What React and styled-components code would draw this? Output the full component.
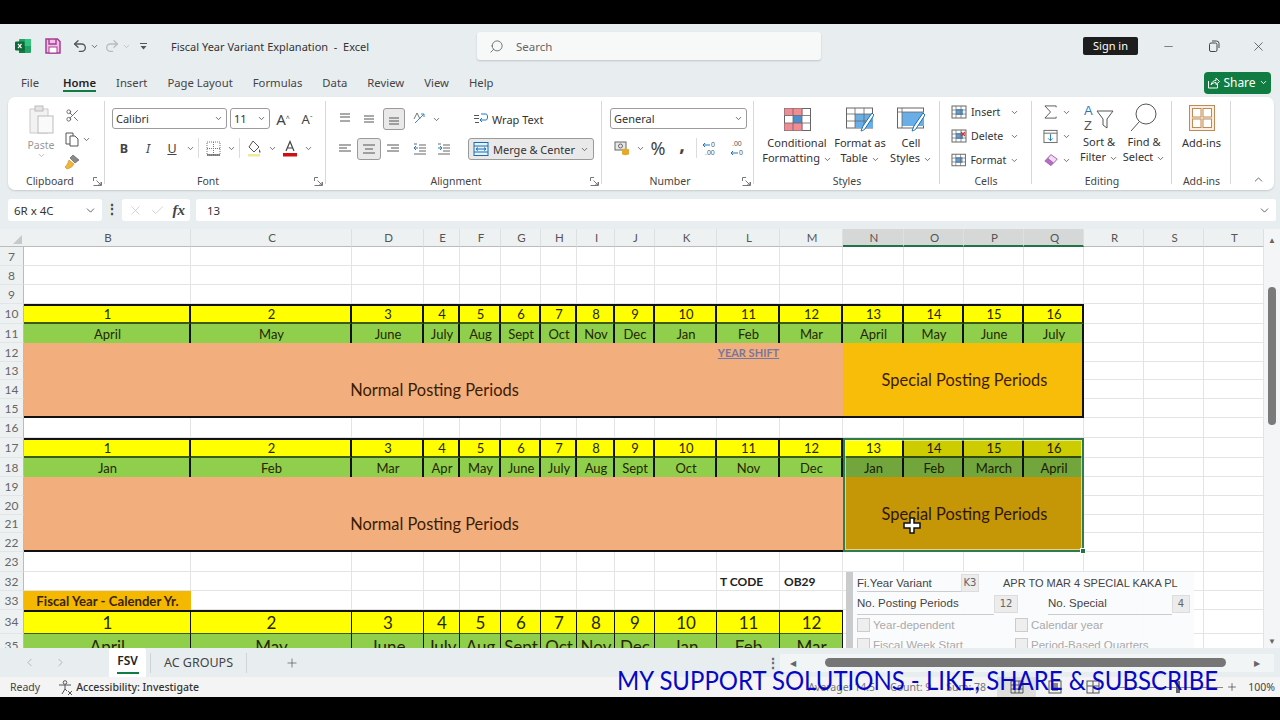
import React from 'react';
import styled, { createGlobalStyle } from 'styled-components';
import {
  Undo2, Redo2, Search, Minus, X, ChevronDown, ChevronUp, Plus, ChevronLeft, ChevronRight, Check, Scissors,
} from 'lucide-react';

const UI = '"Noto Sans", "Open Sans", sans-serif';
const CELL = 'Lato, "Liberation Sans", sans-serif';

const GlobalStyle = createGlobalStyle`
  html, body { margin: 0; padding: 0; background: #000; }
  * { box-sizing: border-box; }
`;

const Page = styled.div`
  width: 1280px;
  height: 720px;
  background: #000;
  padding: 24px 0 23px;
  overflow: hidden;
`;

const Win = styled.div`
  position: relative;
  height: 673px;
  display: flex;
  flex-direction: column;
  background: #e8eef0;
  font-family: ${UI};
  color: #333;
  overflow: hidden;
`;

/* title bar */
const TitleBar = styled.div`
  height: 44px;
  flex: none;
  display: flex;
  align-items: center;
  padding-left: 15px;
`;

const Qat = styled.div`
  display: flex;
  flex: none;
  align-items: center;
  width: 156px;
`;

const QatSlot = styled.span`
  width: ${p => p.$w}px;
  margin-left: ${p => p.$ml || 0}px;
  display: flex;
  justify-content: center;
  align-items: center;
`;

const DocTitle = styled.div`
  width: 306px;
  flex: none;
  font-size: 11px;
  color: #333;
`;

const SearchBox = styled.div`
  width: 344px;
  flex: none;
  height: 28px;
  background: #f7f8f8;
  border-radius: 3px;
  box-shadow: 0 1px 2px rgba(0, 0, 0, 0.18);
  display: flex;
  align-items: center;
  gap: 12px;
  padding-left: 12px;
  font-size: 11.5px;
  color: #666;
`;

const SignIn = styled.div`
  margin-left: 262px;
  width: 55px;
  flex: none;
  height: 18px;
  background: #1d1d1d;
  color: #fff;
  border-radius: 2px;
  font-size: 11px;
  line-height: 18px;
  text-align: center;
`;

const WinControls = styled.div`
  margin-left: 8px;
  flex: none;
  display: flex;
  align-items: center;
`;

const WinBtn = styled.span`
  width: 45px;
  display: flex;
  justify-content: center;
  color: #444;
`;

/* tabs */
const TabRow = styled.div`
  height: 29px;
  flex: none;
  display: flex;
  align-items: center;
  padding: 0 9px 0 21px;
  gap: 20px;
  font-size: 11.3px;
`;

const Tab = styled.div`
  position: relative;
  color: ${p => (p.$on ? '#1f1f1f' : '#444')};
  font-weight: ${p => (p.$on ? 600 : 400)};
  margin-right: ${p => p.$mr || 0}px;
  &::after {
    content: '';
    display: ${p => (p.$on ? 'block' : 'none')};
    position: absolute;
    left: 0;
    right: 0;
    bottom: -2px;
    height: 2px;
    background: #107c41;
  }
`;

const ShareBtn = styled.div`
  margin-left: auto;
  width: 67px;
  height: 22px;
  background: #107c41;
  color: #fff;
  border-radius: 4px;
  display: flex;
  align-items: center;
  justify-content: center;
  gap: 3px;
  font-size: 12px;
`;

/* ribbon */
const Ribbon = styled.div`
  height: 93px;
  flex: none;
  margin: 0 6px 0 8px;
  background: #fff;
  border-radius: 7px;
  box-shadow: 0 1px 2px rgba(0, 0, 0, 0.15);
  display: flex;
`;

const Group = styled.div`
  width: ${p => p.$w}px;
  flex: none;
  display: flex;
  flex-direction: column;
  position: relative;
  &::after {
    content: '';
    position: absolute;
    right: 0;
    top: 4px;
    bottom: 6px;
    width: 1px;
    background: #d8d8d8;
  }
`;

const GroupBody = styled.div`
  height: 77px;
  flex: none;
  display: flex;
  padding: ${p => p.$pad || '0'};
  gap: ${p => p.$gap || 0}px;
`;

const GroupLabel = styled.div`
  position: relative;
  height: 14px;
  font-size: 10.5px;
  line-height: 14px;
  color: #444;
  padding-left: ${p => p.$pl || 0}px;
  padding-right: ${p => p.$pr || 0}px;
  text-align: ${p => (p.$pl ? 'left' : 'center')};
`;

const Launcher = styled.svg`
  position: absolute;
  right: 3px;
  top: 3px;
  width: 9px;
  height: 9px;
`;

const PasteCol = styled.div`
  width: 28px;
  display: flex;
  flex-direction: column;
  align-items: center;
  padding-top: 8px;
  font-size: 10.5px;
  color: #999;
`;

const PasteText = styled.span`
  margin-top: 5px;
  line-height: 12px;
`;

const StackCol = styled.div`
  display: flex;
  flex-direction: column;
  width: ${p => (p.$w ? `${p.$w}px` : 'auto')};
  flex: none;
  padding-top: ${p => p.$top || 0}px;
  gap: ${p => p.$gap || 0}px;
`;

const ToolRow = styled.div`
  display: flex;
  align-items: center;
  height: ${p => p.$h || 22}px;
`;

const Slot = styled.span`
  flex: none;
  width: ${p => p.$w}px;
  height: ${p => p.$h || 20}px;
  margin-left: ${p => p.$ml || 0}px;
  display: flex;
  align-items: center;
  justify-content: center;
  font-size: ${p => p.$fs || 12}px;
  color: ${p => p.$c || '#444'};
  font-weight: ${p => p.$fw || 400};
  font-style: ${p => p.$fi || 'normal'};
  border-radius: 3px;
  padding-bottom: ${p => p.$pb || 0}px;
  ${p => p.$on && 'background: #e9e9e9; border: 1px solid #9a9a9a;'}
`;

const VSep = styled.span`
  flex: none;
  width: 1px;
  height: 20px;
  margin: 0 2px;
  background: #dcdcdc;
`;

const SelectBox = styled.div`
  width: ${p => p.$w}px;
  height: 21px;
  margin-right: ${p => p.$mr || 0}px;
  border: 1px solid #9c9c9c;
  border-radius: 3px;
  display: flex;
  align-items: center;
  justify-content: space-between;
  padding: 0 3px;
  font-size: 11px;
  color: #333;
  background: #fff;
`;

const TextBtn = styled.div`
  margin-left: ${p => p.$ml || 0}px;
  width: ${p => (p.$w ? `${p.$w}px` : 'auto')};
  flex: none;
  height: 22px;
  display: flex;
  align-items: center;
  gap: 4px;
  padding: 0 4px;
  font-size: 11px;
  white-space: nowrap;
  border-radius: 3px;
  color: #333;
  ${p => p.$on && 'background: #e9e9e9; border: 1px solid #9a9a9a;'}
`;

const BigItem = styled.div`
  width: ${p => p.$w}px;
  flex: none;
  display: flex;
  flex-direction: column;
  align-items: center;
  padding-top: ${p => p.$top || 10}px;
`;

const BigIcon = styled.div`
  height: 24px;
  display: flex;
  align-items: center;
  justify-content: center;
`;

const BigText = styled.div`
  margin-top: ${p => p.$mt ?? 4}px;
  font-size: 11px;
  line-height: 15px;
  color: #333;
  text-align: center;
  white-space: nowrap;
`;

const Caret = styled(ChevronDown).attrs({ size: 9, strokeWidth: 2.2 })`
  color: #555;
  vertical-align: middle;
`;

const CellRow = styled.div`
  height: 24px;
  display: flex;
  align-items: center;
  gap: 4px;
  font-size: 10.6px;
  color: #333;
  width: ${p => p.$w || 80}px;
`;

const RowCaret = styled.span`
  margin-left: auto;
  display: flex;
`;

const CollapseBtn = styled.div`
  flex: 1;
  display: flex;
  align-items: flex-end;
  justify-content: flex-end;
  padding: 0 9px 4px 0;
  color: #555;
`;

/* formula bar */
const FormulaBar = styled.div`
  flex: none;
  height: 22px;
  margin: 9px 4px 8px 8px;
  display: flex;
  align-items: stretch;
  font-size: 11.5px;
`;

const FxPanel = styled.div`
  background: #fff;
  border-radius: 3px;
  width: ${p => (p.$w ? `${p.$w}px` : 'auto')};
  flex: ${p => (p.$grow ? 1 : 'none')};
  margin-right: ${p => p.$mr || 0}px;
  display: flex;
  align-items: center;
  justify-content: space-between;
  padding: 0 5px 0 ${p => p.$pl || 6}px;
  color: #333;
`;

const DotsBtn = styled.div`
  width: 20px;
  text-align: center;
  font-weight: 700;
  line-height: 20px;
  color: #444;
  font-size: 14px;
`;

const FxText = styled.span`
  font-family: "Liberation Serif", serif;
  font-style: italic;
  font-weight: 700;
  font-size: 15px;
  color: #444;
`;

/* sheet */
const SheetArea = styled.div`
  position: relative;
  flex: none;
  height: 419px;
  display: flex;
  overflow: hidden;
`;

const Grid = styled.div`
  width: 1264px;
  display: grid;
  grid-template-columns: ${p => p.$cols};
  grid-template-rows: ${p => p.$rows};
  background: #fff;
  font-family: ${CELL};
`;

const Corner = styled.div`
  grid-column: 1;
  grid-row: 1;
  background: #eef1f2;
  border-bottom: 1px solid #bbb;
  display: flex;
  align-items: flex-end;
  justify-content: flex-end;
  padding: 0 2px 2px 0;
`;

const ColHead = styled.div`
  grid-column: ${p => p.$c};
  grid-row: 1;
  display: flex;
  align-items: center;
  justify-content: center;
  font-size: 11.5px;
  color: #555;
  padding-left: 2px;
  background: ${p => (p.$sel ? '#d6d8d8' : '#eef1f2')};
  border-right: 1px solid #dde0e1;
  border-bottom: ${p => (p.$sel ? '2px solid #217346' : '1px solid #bbb')};
`;

const RowHead = styled.div`
  grid-column: 1;
  grid-row: ${p => p.$r};
  display: flex;
  align-items: center;
  justify-content: center;
  font-size: 12px;
  color: #666;
  background: #eef1f2;
  border-right: 1px solid #bbb;
  border-bottom: 1px solid #e2e5e6;
`;

const Blank = styled.div`
  grid-column: ${p => p.$c};
  grid-row: ${p => p.$r};
  border-right: 1px solid #e4e4e4;
  border-bottom: 1px solid #e4e4e4;
`;

const Band = styled.div`
  grid-column: ${p => p.$c};
  grid-row: ${p => p.$r};
  background: ${p => p.$bg};
  display: flex;
  align-items: center;
  justify-content: center;
  font-size: ${p => p.$fs || 13}px;
  color: #262600;
  padding-left: ${p => p.$br || 2}px;
  border-right: ${p => p.$br || 2}px solid #111;
  ${p => p.$top && 'border-top: 2px solid #111;'}
  ${p => p.$bot && `border-bottom: ${p.$bot}px solid #3c5c14;`}
  overflow: hidden;
`;

const Merged = styled.div`
  grid-column: ${p => p.$c};
  grid-row: ${p => p.$r};
  background: ${p => p.$bg};
  display: flex;
  align-items: center;
  justify-content: center;
  font-size: 16.4px;
  color: #3a1c00;
  padding-top: ${p => p.$pt || 0}px;
  padding-left: ${p => (p.$edge ? 4 : 2)}px;
  border-bottom: 2px solid #111;
  ${p => p.$edge && 'border-right: 2px solid #111;'}
`;

const YearShift = styled.div`
  grid-column: 12;
  grid-row: ${p => p.$r};
  z-index: 1;
  align-self: center;
  text-align: center;
  white-space: nowrap;
  font-size: 11px;
  font-weight: 700;
  color: #77779f;
  text-decoration: underline;
`;

const Dim = styled.div`
  grid-column: ${p => p.$c};
  grid-row: ${p => p.$r};
  background: rgba(0, 0, 0, 0.2);
  z-index: 2;
`;

const Selection = styled.div`
  grid-column: 14 / 18;
  grid-row: ${p => p.$r};
  position: relative;
  z-index: 3;
  border: 2px solid #2f7d4f;
  box-shadow: inset 0 0 0 1px rgba(255, 255, 255, 0.55);
`;

const FillHandle = styled.span`
  position: absolute;
  right: -4px;
  bottom: -4px;
  width: 6px;
  height: 6px;
  background: #217346;
  border: 1px solid #fff;
`;

const CrossCursor = styled.svg`
  position: absolute;
  left: 57px;
  top: 77px;
  width: 20px;
  height: 18px;
`;

const PlainCell = styled.div`
  grid-column: ${p => p.$c};
  grid-row: ${p => p.$r};
  z-index: 1;
  display: flex;
  align-items: center;
  padding-left: ${p => p.$pl || 3}px;
  font-size: 12px;
  font-weight: 700;
  color: #222;
`;

const FiscalCell = styled.div`
  grid-column: 2;
  grid-row: ${p => p.$r};
  background: #f5b800;
  display: flex;
  align-items: center;
  justify-content: center;
  font-size: 13.2px;
  font-weight: 700;
  color: #3a2400;
`;

/* pasted SAP dialog */
const Dialog = styled.div`
  position: absolute;
  left: 846px;
  top: 343px;
  width: 348px;
  height: 76px;
  background: rgba(250, 251, 252, 0.96);
  border-left: 7px solid #c9cbcd;
  padding: 2px 4px 0 4px;
  display: flex;
  flex-direction: column;
  font-family: "Liberation Sans", sans-serif;
  font-size: 11.5px;
  color: #444;
  overflow: hidden;
`;

const DlgRow = styled.div`
  flex: none;
  height: ${p => p.$h || 20}px;
  display: flex;
  align-items: center;
`;

const DlgLabel = styled.div`
  flex: none;
  width: ${p => p.$w}px;
  margin-left: ${p => p.$ml || 0}px;
  height: 100%;
  display: flex;
  align-items: center;
  border-bottom: 1px solid #ccc;
  white-space: nowrap;
`;

const DlgField = styled.div`
  flex: none;
  width: ${p => p.$w}px;
  height: 18px;
  background: #ececec;
  border: 1px solid #dcdcdc;
  font-size: 10px;
  font-family: "DejaVu Sans", sans-serif;
  color: #666;
  text-align: center;
  line-height: 16px;
`;

const DlgText = styled.div`
  flex: none;
  margin-left: 24px;
  font-size: 11px;
  white-space: nowrap;
`;

const DlgCheck = styled.div`
  flex: none;
  width: ${p => p.$w}px;
  display: flex;
  align-items: center;
  gap: 3px;
  color: #aaa;
  white-space: nowrap;
  &::before {
    content: '';
    width: 11px;
    height: 12px;
    background: #eee;
    border: 1px solid #ccc;
  }
`;

/* vertical scroll */
const VScroll = styled.div`
  width: 16px;
  background: #f3f5f6;
  display: flex;
  flex-direction: column;
  align-items: center;
  justify-content: space-between;
  padding: 5px 0 2px;
  color: #666;
  font-size: 8px;
  position: relative;
`;

const VThumb = styled.div`
  position: absolute;
  left: 4px;
  top: 58px;
  width: 8px;
  height: 138px;
  border-radius: 4px;
  background: #7a7a7a;
`;

/* sheet tabs */
const SheetTabs = styled.div`
  height: 29px;
  flex: none;
  display: flex;
  align-items: center;
  font-size: 12.5px;
  color: #444;
`;

const TabArrows = styled.div`
  width: 109px;
  padding-left: 23px;
  display: flex;
  gap: 18px;
  color: #aaa;
`;

const SheetTab = styled.div`
  width: ${p => p.$w}px;
  height: ${p => (p.$on ? 29 : 20)}px;
  display: flex;
  flex-direction: column;
  align-items: center;
  justify-content: center;
  background: ${p => (p.$on ? '#fff' : 'transparent')};
  border-radius: 3px 3px 0 0;
  font-weight: ${p => (p.$on ? 600 : 400)};
  font-size: ${p => (p.$on ? 12 : 12.5)}px;
  color: ${p => (p.$on ? '#222' : '#444')};
`;

const TabLine = styled.span`
  width: 22px;
  height: 2px;
  margin-top: 3px;
  background: #107c41;
`;

const TabSep = styled.span`
  width: 1px;
  height: 20px;
  background: #cfd4d6;
  margin: 0 ${p => p.$mr}px 0 ${p => p.$ml}px;
`;

const AddSheet = styled.span`
  margin-left: 30px;
  width: 30px;
  display: flex;
  justify-content: center;
  color: #555;
`;

const HScroll = styled.div`
  margin-left: auto;
  width: 515px;
  height: 18px;
  display: flex;
  align-items: center;
  color: #666;
  font-size: 14px;
`;

const HDots = styled.span`
  width: 15px;
  font-weight: 700;
  text-align: center;
`;

const HTrack = styled.div`
  flex: 1;
  height: 18px;
  margin-right: 6px;
  background: #f2f5f6;
  display: flex;
  align-items: center;
  padding-left: 10px;
  font-size: 8px;
`;

const HThumb = styled.div`
  width: 401px;
  height: 9px;
  margin: 0 28px 0 29px;
  background: #767676;
  border-radius: 5px;
  flex: none;
`;

/* status bar */
const StatusBar = styled.div`
  flex: 1;
  display: flex;
  align-items: center;
  background: #f4f4f4;
  padding: 0 5px 0 10px;
  font-size: 10.5px;
  color: #444;
`;

const A11y = styled.div`
  margin-left: 18px;
  display: flex;
  align-items: center;
  gap: 3px;
  font-weight: 500;
  color: #333;
  white-space: nowrap;
`;

const Stats = styled.div`
  margin-left: auto;
  width: 189px;
  flex: none;
  display: flex;
  gap: 15px;
  font-size: 10.5px;
  color: #777;
  white-space: nowrap;
`;

const ViewBtn = styled.span`
  width: ${p => p.$w}px;
  flex: none;
  height: 20px;
  display: flex;
  align-items: center;
  justify-content: center;
  background: ${p => (p.$on ? '#dedede' : 'transparent')};
`;

const Zoomer = styled.div`
  position: relative;
  flex: none;
  width: 106px;
  height: 1px;
  margin-left: 5px;
  background: #888;
`;

const ZoomThumb = styled.span`
  position: absolute;
  left: 59px;
  top: -6px;
  width: 4px;
  height: 12px;
  background: #666;
`;

const ZoomPct = styled.span`
  margin-left: 10px;
  color: #444;
  white-space: nowrap;
`;

const Banner = styled.div`
  position: absolute;
  left: 617px;
  top: 641px;
  font-family: ${CELL};
  font-size: 26.5px;
  line-height: 30px;
  color: #0707c4;
  white-space: nowrap;
  z-index: 5;
  transform: scaleX(0.904);
  transform-origin: left center;
`;

/* ribbon drawings */
const Sv = ({ w, h = w, children }) => (
  <svg width={w} height={h} viewBox={`0 0 ${w} ${h}`} fill="none">{children}</svg>
);

const ExcelLogo = () => (
  <Sv w={16}>
    <rect x="4" y="1" width="12" height="14" rx="1" fill="#21a366" />
    <rect x="10" y="1" width="6" height="7" fill="#33c481" />
    <rect x="4" y="8" width="6" height="7" fill="#107c41" />
    <rect x="0" y="3.5" width="9.5" height="9" rx="1" fill="#0b6a37" />
    <path d="M3 5.8l3.5 4.4M6.5 5.8L3 10.2" stroke="#fff" strokeWidth="1.2" />
  </Sv>
);

const SaveIcon = () => (
  <Sv w={16}>
    <path d="M1 1h11.5L15 3.5V15H1z" fill="#efc1e4" stroke="#a83b94" strokeWidth="1.5" />
    <path d="M4 1v5h7V1" stroke="#a83b94" strokeWidth="1.4" />
    <rect x="4" y="9" width="8" height="6" fill="#fff" stroke="#a83b94" />
  </Sv>
);

const QatMore = () => (
  <Sv w={9}>
    <path d="M1 1.5h7" stroke="#555" />
    <path d="M1.5 4h6L4.500 7.500z" fill="#555" />
  </Sv>
);

const RestoreIcon = () => (
  <Sv w={12}>
    <rect x="1.500" y="3" width="7.500" height="8.500" rx="1.500" stroke="#444" />
    <path d="M4 1h4.500A2.500 2.500 0 0 1 11 3.500V8" stroke="#444" />
  </Sv>
);

const ShareIcon = () => (
  <Sv w={13}>
    <path d="M1.500 5v7h9V8" stroke="#fff" />
    <path d="M4 9c.5-3 2.500-4.500 5-4.500V2l3.500 3.500L9 8.500V6.500C7 6.500 5 7.500 4 9z" stroke="#fff" />
  </Sv>
);

const PasteIcon = () => (
  <Sv w={27} h={29}>
    <path d="M2 4h18v24H2z" fill="#f2f2f2" stroke="#c9c9c9" />
    <rect x="7" y="1" width="8" height="5" fill="#e4e4e4" stroke="#bbb" />
    <rect x="10" y="11" width="15" height="17" fill="#fafafa" stroke="#bbb" />
  </Sv>
);

const CopyIcon = () => (
  <Sv w={14} h={15}>
    <path d="M1 1h7v11H1z" stroke="#555" />
    <path d="M5 4h5l3 3v7H5z" fill="#fff" stroke="#555" />
  </Sv>
);

const PainterIcon = () => (
  <Sv w={16}>
    <path d="M9 1l6 5-4 3-5-5z" fill="#8a8a8a" stroke="#555" strokeWidth="0.6" />
    <path d="M5 6l5 4c-1 2-3 4-7 5-1-1-1.500-1.500-2-2 2-2 3-4 4-7z" fill="#efb63c" stroke="#c68a1c" strokeWidth="0.6" />
  </Sv>
);

const BorderIcon = () => (
  <Sv w={15}>
    <path d="M1 1h13v13H1zM7.500 1v13M1 7.500h13" stroke="#777" strokeDasharray="1 1" />
    <path d="M1 14h13" stroke="#555" strokeWidth="1.300" />
  </Sv>
);

const FillIcon = () => (
  <Sv w={16} h={17}>
    <path d="M7 1l6 6-5 5-5-5z" stroke="#555" />
    <path d="M13 9c1 1.500 1.500 2 1.500 3s-1 1-1.500 0z" fill="#555" />
    <rect x="2" y="14" width="12" height="2.500" fill="#f0e89a" />
  </Sv>
);

const FontColorIcon = () => (
  <Sv w={16} h={17}>
    <path d="M4 11L8 1.500 12 11M5.500 8h5" stroke="#444" strokeWidth="1.200" />
    <rect x="1" y="13" width="14" height="3.500" fill="#d01010" />
  </Sv>
);

const Lines = ({ ys, x1 = [1, 1, 1], x2 = [13, 13, 13] }) => (
  <Sv w={14} h={14}>
    {ys.map((y, i) => (
      <path key={y} d={`M${x1[i]} ${y}H${x2[i]}`} stroke="#555" />
    ))}
  </Sv>
);

const OrientIcon = () => (
  <Sv w={16}>
    <path d="M3 12L12 3M9 3h3v3" stroke="#3a8abf" />
    <path d="M2 8l3-6 3 6" stroke="#666" strokeWidth="0.9" />
  </Sv>
);

const IndentIcon = ({ flip }) => (
  <Sv w={14}>
    <path d="M6 3h7M6 6h7M6 9h7M1 12h12M1 2h3" stroke="#666" />
    <path d={flip ? 'M1 6h4M3 4l2 2-2 2' : 'M5 6H1M3 4L1 6l2 2'} stroke="#2a7ab8" />
  </Sv>
);

const WrapIcon = () => (
  <Sv w={15}>
    <path d="M1 3.500h5M1 6.500h5M6 10.500H2" stroke="#555" />
    <path d="M8 2h5c2 0 2 6 0 6H7l2-2M7 8l2 2" stroke="#1b78c0" />
  </Sv>
);

const MergeIcon = () => (
  <Sv w={16}>
    <rect x="1" y="1.500" width="14" height="13" fill="#e7f1fa" stroke="#1b6fb0" />
    <path d="M1 5h14M1 11h14" stroke="#1b6fb0" />
    <path d="M3 8h10M5 6.500L3 8l2 1.500M11 6.500L13 8l-2 1.500" stroke="#1b6fb0" />
  </Sv>
);

const AccountingIcon = () => (
  <Sv w={17}>
    <rect x="1" y="2" width="11" height="8" fill="#e8e8e8" stroke="#666" />
    <circle cx="6.500" cy="6" r="2" stroke="#666" />
    <ellipse cx="11.500" cy="10" rx="3.500" ry="1.500" fill="#e5a82a" />
    <path d="M8 10v4c0 1.500 7 1.500 7 0v-4" fill="#e5a82a" />
  </Sv>
);

const DecimalIcon = ({ flip }) => (
  <Sv w={18} h={17}>
    <path d={flip ? 'M9 13H2M4 11l-2 2 2 2' : 'M2 5h7M4 3L2 5l2 2'} stroke="#1b78c0" />
    <text x={flip ? 3 : 10} y={flip ? 6 : 7} fontSize="7" fill="#555" fontFamily="Liberation Sans">{flip ? '.00' : '0'}</text>
    <text x={flip ? 10 : 4} y="15" fontSize="7" fill="#555" fontFamily="Liberation Sans">{flip ? '0' : '.00'}</text>
  </Sv>
);

const CondIcon = () => (
  <Sv w={27} h={23}>
    <rect x="0.500" y="0.500" width="26" height="22" fill="#fff" stroke="#666" />
    <rect x="0.500" y="0.500" width="18" height="7" fill="#ef8c94" />
    <rect x="9" y="7.500" width="9" height="7.500" fill="#4a8fd0" />
    <rect x="0.500" y="15" width="18" height="7.500" fill="#ef8c94" />
    <path d="M9 .5v22M18 .5v22M.5 7.500h26M.5 15h26" stroke="#666" strokeWidth="0.8" />
  </Sv>
);

const TableIcon = ({ cell }) => (
  <Sv w={28} h={25}>
    <rect x="0.500" y="1" width="26" height="20" fill="#fff" stroke="#666" />
    {cell ? (
      <rect x="5" y="5" width="22" height="14" fill="#6aaee8" />
    ) : (
      <rect x="9" y="7" width="18" height="14" fill="#6aaee8" />
    )}
    <path d={cell ? 'M5 1v20M.5 5h26' : 'M9 1v20M18 1v20M.5 7h26M.5 14h26'} stroke="#666" strokeWidth="0.8" />
    <path d="M26 6l-9 13-2 5c2-.5 4-1.500 4.500-3L28 8z" fill="#fff" stroke="#1b6fb0" />
  </Sv>
);

const CellOpIcon = ({ tint, del }) => (
  <Sv w={16} h={14}>
    <rect x="1" y="1" width="14" height="12" fill="#fff" stroke="#666" />
    <rect x="5" y="4" width="7" height="6" fill={tint} />
    <path d="M5 1v12M10 1v12M1 5h14M1 9h14" stroke="#666" strokeWidth="0.7" />
    {del && <path d="M10 3l4 4M14 3l-4 4" stroke="#d0342c" strokeWidth="1.200" />}
  </Sv>
);

const FillDown = () => (
  <Sv w={16}>
    <rect x="1" y="2" width="14" height="13" stroke="#666" />
    <path d="M1 5h14" stroke="#666" />
    <path d="M8 6v7M5.500 10.500L8 13l2.500-2.500" stroke="#1b78c0" />
  </Sv>
);

const EraserIcon = () => (
  <Sv w={17} h={14}>
    <path d="M9 1l7 5-7 7.500L2 8z" fill="#b56cc4" stroke="#8a3e9e" strokeWidth="0.6" />
    <path d="M9 1l7 5-4 4.500L5.500 5z" fill="#f1dcf4" stroke="#8a3e9e" strokeWidth="0.6" />
  </Sv>
);

const SigmaIcon = () => (
  <Sv w={16}>
    <path d="M14 3V1.500H2L8 8l-6 6.500h12V13" stroke="#555" />
  </Sv>
);

const SortIcon = () => (
  <svg width="30" height="30" viewBox="0 0 30 30" fill="none">
    <text x="0" y="13" fontSize="13" fill="#2a7ab8" fontFamily="Liberation Sans">A</text>
    <text x="0" y="28" fontSize="13" fill="#555" fontFamily="Liberation Sans">Z</text>
    <path d="M13 9h16l-6 8v9l-4-3v-6z" stroke="#555" />
  </svg>
);

const FindIcon = () => (
  <svg width="28" height="30" viewBox="0 0 28 30" fill="none">
    <circle cx="16" cy="12" r="10" stroke="#555" />
    <path d="M9 20L1 29" stroke="#555" />
  </svg>
);

const AddinsIcon = () => (
  <Sv w={26}>
    <rect x="0.500" y="0.500" width="25" height="25" fill="#fbeee0" stroke="#c08a54" />
    <rect x="3.500" y="3.500" width="8.500" height="8.500" fill="#fff" stroke="#c08a54" />
    <rect x="14" y="3.500" width="8.500" height="8.500" fill="#fff" stroke="#c08a54" />
    <rect x="3.500" y="14" width="8.500" height="8.500" fill="#fff" stroke="#c08a54" />
    <rect x="14" y="14" width="8.500" height="8.500" fill="#fff" stroke="#c08a54" />
  </Sv>
);

const A11yIcon = () => (
  <Sv w={15}>
    <circle cx="7" cy="2.500" r="1.800" stroke="#555" />
    <path d="M1 5h12M7 5v4M7 9l-3 5M7 9l2 2" stroke="#555" />
    <path d="M10 11l4 4M14 11l-4 4" stroke="#555" />
  </Sv>
);

const LaunchMark = () => (
  <Launcher viewBox="0 0 9 9" fill="none">
    <path d="M.5 4V.5H4M.5 8.500h8V5" stroke="#777" />
    <path d="M3.500 3.500L8 8M8 5v3H5" stroke="#777" />
  </Launcher>
);

const GridIcon = () => (
  <Sv w={14}>
    <path d="M1 1h12v12H1zM1 5h12M1 9h12M5 1v12M9 1v12" stroke="#555" />
  </Sv>
);

const PageIcon = () => (
  <Sv w={14}>
    <rect x="1" y="1" width="12" height="12" stroke="#555" />
    <rect x="4" y="3" width="6" height="8" fill="#888" />
  </Sv>
);

const BreakIcon = () => (
  <Sv w={14}>
    <rect x="1" y="1" width="12" height="12" stroke="#555" />
    <path d="M7 1v12M1 6h12" stroke="#555" />
  </Sv>
);

/* data */
const colNames = 'BCDEFGHIJKLMNOPQRST'.split('');
const colWidths = [167, 161, 72, 36, 41, 40, 36, 38, 40, 62, 63, 63, 61, 60, 60, 60, 60, 60, 60];
const rowDefs = [
  [7, 19], [8, 19], [9, 19], [10, 20], [11, 19], [12, 19], [13, 18], [14, 19], [15, 19], [16, 20], [17, 20],
  [18, 19], [19, 19], [20, 19], [21, 18], [22, 19], [23, 20], [32, 19], [33, 19], [34, 24], [35, 24],
];
const gridRow = n => rowDefs.findIndex(r => r[0] === n) + 2;
const gridCols = `24px ${colWidths.map(w => `${w}px`).join(' ')}`;
const gridRows = `18px ${rowDefs.map(r => `${r[1]}px`).join(' ')}`;

const monthsA = ['April', 'May', 'June', 'July', 'Aug', 'Sept', 'Oct', 'Nov', 'Dec', 'Jan', 'Feb', 'Mar', 'April', 'May', 'June', 'July'];
const monthsB = ['Jan', 'Feb', 'Mar', 'Apr', 'May', 'June', 'July', 'Aug', 'Sept', 'Oct', 'Nov', 'Dec', 'Jan', 'Feb', 'March', 'April'];
const YELLOW = '#ffff00';
const GREEN = '#8fcf4c';

const PeriodRows = ({ numRow, nameRow, names }) => (
  <>
    {names.map((m, i) => (
      <React.Fragment key={i}>
        <Band $c={i + 2} $r={gridRow(numRow)} $bg={YELLOW} $top $bot={2}>{i + 1}</Band>
        <Band $c={i + 2} $r={gridRow(nameRow)} $bg={GREEN}>{m}</Band>
      </React.Fragment>
    ))}
  </>
);

const Sheet = () => (
  <Grid $cols={gridCols} $rows={gridRows}>
    <Corner>
      <Sv w={9} h={9}><path d="M9 0v9H0z" fill="#c6c9ca" /></Sv>
    </Corner>
    {colNames.map((c, i) => (
      <ColHead key={c} $c={i + 2} $sel={i >= 12 && i <= 15}>{c}</ColHead>
    ))}
    {rowDefs.map(([n], ri) => (
      <React.Fragment key={n}>
        <RowHead $r={ri + 2}>{n}</RowHead>
        {colNames.map((c, i) => (
          <Blank key={c} $c={i + 2} $r={ri + 2} />
        ))}
      </React.Fragment>
    ))}

    <PeriodRows numRow={10} nameRow={11} names={monthsA} />
    <Merged $c="2 / 14" $r={`${gridRow(12)} / ${gridRow(16)}`} $bg="#f2ae7c" $pt={19}>Normal Posting Periods</Merged>
    <Merged $c="14 / 18" $r={`${gridRow(12)} / ${gridRow(16)}`} $bg="#f7bd08" $edge>Special Posting Periods</Merged>
    <YearShift $r={gridRow(12)}>YEAR SHIFT</YearShift>

    <PeriodRows numRow={17} nameRow={18} names={monthsB} />
    <Merged $c="2 / 14" $r={`${gridRow(19)} / ${gridRow(23)}`} $bg="#f2ae7c" $pt={19}>Normal Posting Periods</Merged>
    <Merged $c="14 / 18" $r={`${gridRow(19)} / ${gridRow(23)}`} $bg="#f7bd08" $edge>Special Posting Periods</Merged>
    <Dim $c="15 / 18" $r={gridRow(17)} />
    <Dim $c="14 / 18" $r={`${gridRow(18)} / ${gridRow(23)}`} />
    <Selection $r={`${gridRow(17)} / ${gridRow(23)}`}>
      <FillHandle />
      <CrossCursor viewBox="0 0 20 18" fill="none">
        <path d="M8 1h4v5h6v5h-6v5H8v-5H2V6h6z" fill="#fff" stroke="#111" strokeWidth="1.500" />
      </CrossCursor>
    </Selection>

    <PlainCell $c={12} $r={gridRow(32)}>T CODE</PlainCell>
    <PlainCell $c={13} $r={gridRow(32)} $pl={4}>OB29</PlainCell>
    <FiscalCell $r={gridRow(33)}>Fiscal Year - Calender Yr.</FiscalCell>
    {monthsA.slice(0, 12).map((m, i) => (
      <React.Fragment key={i}>
        <Band $c={i + 2} $r={gridRow(34)} $bg={YELLOW} $fs={17} $br={1} $top $bot={1}>{i + 1}</Band>
        <Band $c={i + 2} $r={gridRow(35)} $bg={GREEN} $fs={17} $br={1}>{m}</Band>
      </React.Fragment>
    ))}
  </Grid>
);

const App = () => (
  <Page>
    <GlobalStyle />
    <Win>
      <TitleBar>
        <Qat>
          <QatSlot $w={16}><ExcelLogo /></QatSlot>
          <QatSlot $w={16} $ml={14}><SaveIcon /></QatSlot>
          <QatSlot $w={18} $ml={10}><Undo2 size={16} color="#555" /></QatSlot>
          <QatSlot $w={10}><Caret /></QatSlot>
          <QatSlot $w={18} $ml={4}><Redo2 size={16} color="#bbb" /></QatSlot>
          <QatSlot $w={10}><Caret color="#bbb" /></QatSlot>
          <QatSlot $w={10} $ml={7}><QatMore /></QatSlot>
        </Qat>
        <DocTitle>Fiscal Year Variant Explanation &nbsp;-&nbsp; Excel</DocTitle>
        <SearchBox>
          <Search size={15} strokeWidth={1.4} style={{ transform: 'scaleX(-1)' }} />
          Search
        </SearchBox>
        <SignIn>Sign in</SignIn>
        <WinControls>
          <WinBtn><Minus size={13} strokeWidth={1.2} /></WinBtn>
          <WinBtn><RestoreIcon /></WinBtn>
          <WinBtn><X size={15} strokeWidth={1.2} /></WinBtn>
        </WinControls>
      </TitleBar>

      <TabRow>
        <Tab $mr={4}>File</Tab>
        <Tab $on>Home</Tab>
        <Tab>Insert</Tab>
        <Tab>Page Layout</Tab>
        <Tab>Formulas</Tab>
        <Tab>Data</Tab>
        <Tab>Review</Tab>
        <Tab>View</Tab>
        <Tab>Help</Tab>
        <ShareBtn>
          <ShareIcon />
          Share
          <ChevronDown size={9} strokeWidth={2.4} />
        </ShareBtn>
      </TabRow>

      <Ribbon>
        <Group $w={97}>
          <GroupBody $pad="0 0 0 19px" $gap={8}>
            <PasteCol>
              <PasteIcon />
              <PasteText>Paste</PasteText>
              <ChevronDown size={9} color="#aaa" />
            </PasteCol>
            <StackCol $top={6}>
              <ToolRow $h={24}><Slot $w={18}><Scissors size={15} strokeWidth={1.3} color="#555" /></Slot></ToolRow>
              <ToolRow $h={24}><Slot $w={18}><CopyIcon /></Slot><Slot $w={10}><Caret /></Slot></ToolRow>
              <ToolRow $h={22}><Slot $w={18}><PainterIcon /></Slot></ToolRow>
            </StackCol>
          </GroupBody>
          <GroupLabel $pl={18}>Clipboard<LaunchMark /></GroupLabel>
        </Group>

        <Group $w={221}>
          <GroupBody $pad="11px 0 0 7px">
            <StackCol $gap={8}>
              <ToolRow $h={21}>
                <SelectBox $w={115} $mr={3}>Calibri<Caret /></SelectBox>
                <SelectBox $w={40}>11<Caret /></SelectBox>
                <Slot $w={24} $fs={15} $ml={1}>A<sup style={{ fontSize: 7 }}>^</sup></Slot>
                <Slot $w={24} $fs={13}>A<sup style={{ fontSize: 7 }}>ˇ</sup></Slot>
              </ToolRow>
              <ToolRow $h={22}>
                <Slot $w={24} $fw={700} $fs={12.5}>B</Slot>
                <Slot $w={24} $fi="italic" $fs={12.5}>I</Slot>
                <Slot $w={24} $fs={12.5}><u>U</u></Slot>
                <Slot $w={12}><Caret /></Slot>
                <VSep />
                <Slot $w={24}><BorderIcon /></Slot>
                <Slot $w={12}><Caret /></Slot>
                <VSep />
                <Slot $w={24}><FillIcon /></Slot>
                <Slot $w={12}><Caret /></Slot>
                <Slot $w={24}><FontColorIcon /></Slot>
                <Slot $w={12}><Caret /></Slot>
              </ToolRow>
            </StackCol>
          </GroupBody>
          <GroupLabel $pr={15}>Font<LaunchMark /></GroupLabel>
        </Group>

        <Group $w={276}>
          <GroupBody $pad="11px 0 0 7px">
            <StackCol $gap={8}>
              <ToolRow>
                <Slot $w={24}><Lines ys={[2, 5, 9]} x1={[2, 2, 2]} x2={[12, 12, 12]} /></Slot>
                <Slot $w={24}><Lines ys={[4, 7, 10]} x1={[2, 2, 2]} x2={[12, 12, 12]} /></Slot>
                <Slot $w={22} $h={22} $ml={2} $on><Lines ys={[6, 9, 12]} x1={[2, 2, 2]} x2={[12, 12, 12]} /></Slot>
                <Slot $w={22} $ml={4}><OrientIcon /></Slot>
                <Slot $w={10}><Caret /></Slot>
                <TextBtn $ml={28}><WrapIcon />Wrap Text</TextBtn>
              </ToolRow>
              <ToolRow>
                <Slot $w={24}><Lines ys={[3, 6, 9]} x2={[13, 9, 13]} /></Slot>
                <Slot $w={24} $h={22} $on><Lines ys={[3, 7, 11]} x1={[1, 3, 1]} x2={[13, 11, 13]} /></Slot>
                <Slot $w={24}><Lines ys={[3, 6, 9]} x1={[1, 5, 1]} /></Slot>
                <Slot $w={22} $ml={4}><IndentIcon /></Slot>
                <Slot $w={22} $ml={2}><IndentIcon flip /></Slot>
                <TextBtn $ml={13} $w={126} $on>
                  <MergeIcon />
                  Merge &amp; Center
                  <RowCaret><Caret /></RowCaret>
                </TextBtn>
              </ToolRow>
            </StackCol>
          </GroupBody>
          <GroupLabel $pr={16}>Alignment<LaunchMark /></GroupLabel>
        </Group>

        <Group $w={152}>
          <GroupBody $pad="11px 0 0 8px">
            <StackCol $gap={8}>
              <ToolRow $h={21}><SelectBox $w={137}>General<Caret /></SelectBox></ToolRow>
              <ToolRow>
                <Slot $w={18} $ml={3}><AccountingIcon /></Slot>
                <Slot $w={12} $ml={3}><Caret /></Slot>
                <Slot $w={24} $fs={18}>%</Slot>
                <Slot $w={24} $fs={20} $fw={700} $pb={10}>,</Slot>
                <VSep />
                <Slot $w={22}><DecimalIcon /></Slot>
                <Slot $w={22} $ml={6}><DecimalIcon flip /></Slot>
              </ToolRow>
            </StackCol>
          </GroupBody>
          <GroupLabel $pr={16}>Number<LaunchMark /></GroupLabel>
        </Group>

        <Group $w={186}>
          <GroupBody $pad="0 0 0 10px">
            <BigItem $w={66}><BigIcon><CondIcon /></BigIcon><BigText>Conditional<br />Formatting <Caret /></BigText></BigItem>
            <BigItem $w={60}><BigIcon><TableIcon /></BigIcon><BigText>Format as<br />Table <Caret /></BigText></BigItem>
            <BigItem $w={42}><BigIcon><TableIcon cell /></BigIcon><BigText>Cell<br />Styles <Caret /></BigText></BigItem>
          </GroupBody>
          <GroupLabel>Styles</GroupLabel>
        </Group>

        <Group $w={92}>
          <GroupBody $pad="3px 0 0 11px">
            <StackCol>
              <CellRow $w={68}><CellOpIcon tint="#5aa0dc" />Insert<RowCaret><Caret /></RowCaret></CellRow>
              <CellRow $w={68}><CellOpIcon tint="#5aa0dc" del />Delete<RowCaret><Caret /></RowCaret></CellRow>
              <CellRow $w={68}><CellOpIcon tint="#5aa0dc" />Format <Caret /></CellRow>
            </StackCol>
          </GroupBody>
          <GroupLabel>Cells</GroupLabel>
        </Group>

        <Group $w={140}>
          <GroupBody $pad="3px 0 0 11px">
            <StackCol $w={33}>
              <CellRow $w={28}><SigmaIcon /><RowCaret><Caret /></RowCaret></CellRow>
              <CellRow $w={28}><FillDown /><RowCaret><Caret /></RowCaret></CellRow>
              <CellRow $w={28}><EraserIcon /><RowCaret><Caret /></RowCaret></CellRow>
            </StackCol>
            <BigItem $w={46} $top={2}><SortIcon /><BigText $mt={2}>Sort &amp;<br />Filter <Caret /></BigText></BigItem>
            <BigItem $w={44} $top={2}><FindIcon /><BigText $mt={2}>Find &amp;<br />Select <Caret /></BigText></BigItem>
          </GroupBody>
          <GroupLabel>Editing</GroupLabel>
        </Group>

        <Group $w={59}>
          <GroupBody>
            <BigItem $w={59} $top={8}><AddinsIcon /><BigText>Add-ins</BigText></BigItem>
          </GroupBody>
          <GroupLabel>Add-ins</GroupLabel>
        </Group>

        <CollapseBtn><ChevronUp size={13} strokeWidth={1.6} /></CollapseBtn>
      </Ribbon>

      <FormulaBar>
        <FxPanel $w={94}>6R x 4C<ChevronDown size={13} strokeWidth={1.4} /></FxPanel>
        <DotsBtn>⋮</DotsBtn>
        <FxPanel $w={68} $pl={6} $mr={6}>
          <X size={15} strokeWidth={1} color="#bbb" />
          <Check size={15} strokeWidth={1} color="#bbb" />
          <FxText>fx</FxText>
        </FxPanel>
        <FxPanel $grow $pl={11}>13<ChevronDown size={13} strokeWidth={1.4} /></FxPanel>
      </FormulaBar>

      <SheetArea>
        <Sheet />
        <Dialog>
          <DlgRow $h={18}>
            <DlgLabel $w={104}>Fi.Year Variant</DlgLabel>
            <DlgField $w={18}>K3</DlgField>
            <DlgText>APR TO MAR 4 SPECIAL KAKA PL</DlgText>
          </DlgRow>
          <DlgRow $h={23}>
            <DlgLabel $w={137}>No. Posting Periods</DlgLabel>
            <DlgField $w={24}>12</DlgField>
            <DlgLabel $w={124} $ml={30}>No. Special</DlgLabel>
            <DlgField $w={18}>4</DlgField>
          </DlgRow>
          <DlgRow>
            <DlgCheck $w={158}>Year-dependent</DlgCheck>
            <DlgCheck $w={160}>Calendar year</DlgCheck>
          </DlgRow>
          <DlgRow>
            <DlgCheck $w={158}>Fiscal Week Start</DlgCheck>
            <DlgCheck $w={160}>Period-Based Quarters</DlgCheck>
          </DlgRow>
        </Dialog>
        <VScroll>
          <span>▲</span>
          <VThumb />
          <span>▼</span>
        </VScroll>
      </SheetArea>

      <SheetTabs>
        <TabArrows>
          <ChevronLeft size={13} strokeWidth={1.5} />
          <ChevronRight size={13} strokeWidth={1.5} />
        </TabArrows>
        <SheetTab $w={37} $on>FSV<TabLine /></SheetTab>
        <TabSep $ml={4} $mr={12} />
        <SheetTab $w={71}>AC GROUPS</SheetTab>
        <TabSep $ml={12} $mr={0} />
        <AddSheet><Plus size={14} strokeWidth={1.2} /></AddSheet>
        <HScroll>
          <HDots>⋮</HDots>
          <HTrack>
            <span>◀</span>
            <HThumb />
            <span>▶</span>
          </HTrack>
        </HScroll>
      </SheetTabs>

      <StatusBar>
        Ready
        <A11y><A11yIcon />Accessibility: Investigate</A11y>
        <Stats><span>Average: 14.5</span><span>Count: 9</span><span>Sum: 78</span></Stats>
        <ViewBtn $w={39} $on><GridIcon /></ViewBtn>
        <ViewBtn $w={38}><PageIcon /></ViewBtn>
        <ViewBtn $w={38}><BreakIcon /></ViewBtn>
        <Zoomer><ZoomThumb /></Zoomer>
        <Plus size={12} strokeWidth={1.4} style={{ marginLeft: 3, flex: 'none' }} />
        <ZoomPct>100%</ZoomPct>
      </StatusBar>

      <Banner>MY SUPPORT SOLUTIONS - LIKE, SHARE &amp; SUBSCRIBE</Banner>
    </Win>
  </Page>
);

export default App;
